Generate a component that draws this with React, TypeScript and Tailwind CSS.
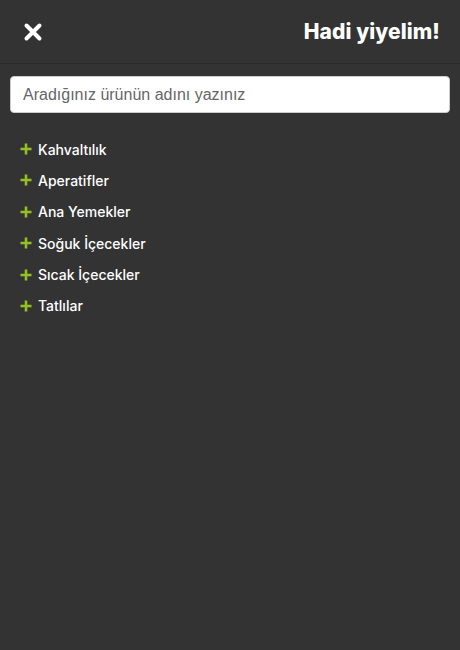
import React, { useState } from 'react';

const categories = ['Kahvaltılık', 'Aperatifler', 'Ana Yemekler', 'Soğuk İçecekler', 'Sıcak İçecekler', 'Tatlılar'];

const App: React.FC = () => {
    const [query, setQuery] = useState('');

    return (
        <div className="min-h-screen w-full bg-[#333333] font-['Inter',sans-serif] text-white">
            {/* header */}
            <div className="flex h-[64px] items-center justify-between border-b border-[#2a2a2a] px-[22px] pr-[20px]">
                <button type="button" className="flex h-[22px] w-[22px] items-center justify-center">
                    <svg width="20" height="20" viewBox="0 0 20 20">
                        <path d="M3.5 3.5 L16.5 16.5 M16.5 3.5 L3.5 16.5" stroke="white" strokeWidth="4" strokeLinecap="round" />
                    </svg>
                </button>
                <h1 className="text-[21px] font-extrabold tracking-[0.1px]">Hadi yiyelim!</h1>
            </div>

            {/* search */}
            <div className="px-[10px] pt-[12px]">
                <input
                    value={query}
                    onChange={(e) => setQuery(e.target.value)}
                    placeholder="Aradığınız ürünün adını yazınız"
                    className="h-[37px] w-full rounded-[4px] border border-[#ccc] bg-white px-[12px] font-['Liberation_Sans',Arial,sans-serif] text-[16px] text-[#555] placeholder:text-[#666] focus:outline-none"
                />
            </div>

            {/* categories */}
            <ul className="flex flex-col gap-[11.4px] px-[20px] pt-[26px]">
                {categories.map((c) => (
                    <li key={c} className="flex h-[20px] items-center gap-[6px] text-[14px] font-medium">
                        <svg width="12" height="12" viewBox="0 0 12 12">
                            <path d="M6 0.5 V11.5 M0.5 6 H11.5" stroke="#93c11d" strokeWidth="2.6" />
                        </svg>
                        <span>{c}</span>
                    </li>
                ))}
            </ul>
        </div>
    );
};

export default App;
